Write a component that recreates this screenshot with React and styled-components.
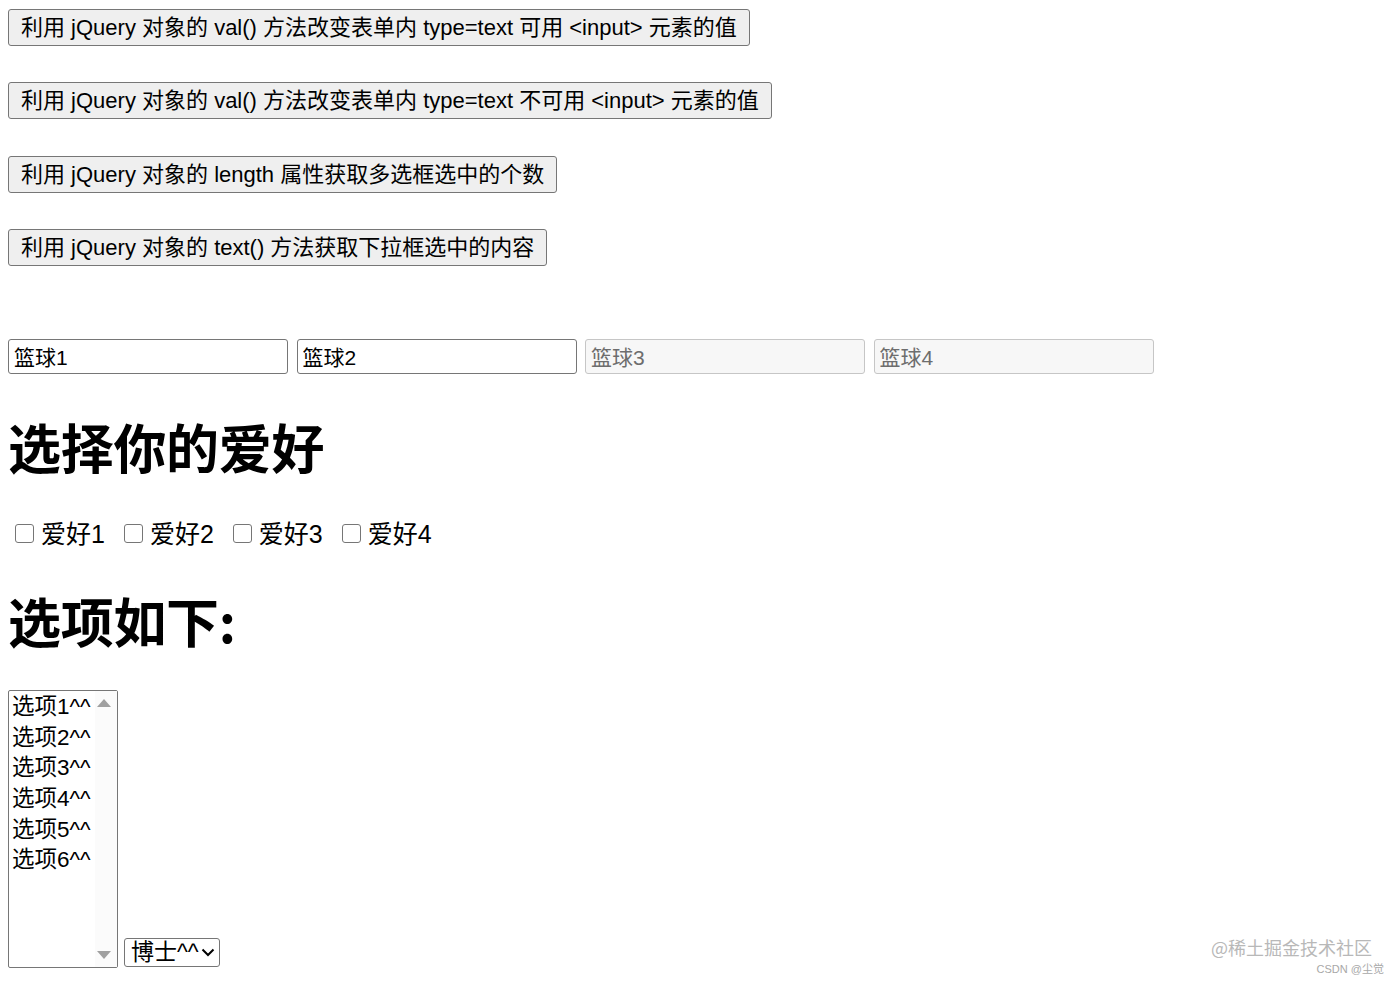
import React from "react";
import styled, { createGlobalStyle } from "styled-components";

const Global = createGlobalStyle`
  html, body { margin: 0; padding: 0; background: #fff; }
  body {
    font-family: "Liberation Sans", Arial, "Noto Sans CJK SC", sans-serif;
    color: #000;
  }
`;

const Page = styled.div`
  position: relative;
  width: 1399px;
  height: 984px;
  padding: 9px 8px 0 8px;
  box-sizing: border-box;
  overflow: hidden;
`;

const ButtonStack = styled.div`
  display: flex;
  flex-direction: column;
  align-items: flex-start;
  gap: 36.3px;
`;

const ActionButton = styled.button`
  height: 37px;
  padding: 0 12px 0 12px;
  font-family: "Liberation Sans", Arial, "Noto Sans CJK SC", sans-serif;
  font-size: 22px;
  line-height: 35px;
  color: #000;
  background: #efefef;
  border: 1px solid #767676;
  border-radius: 3px;
  box-sizing: border-box;
  white-space: nowrap;
  cursor: default;
`;

const InputRow = styled.div`
  display: flex;
  gap: 8.5px;
  margin-top: 73px;
`;

const TextInput = styled.input`
  width: 280px;
  height: 35px;
  box-sizing: border-box;
  padding: 0 5px;
  font-family: "Liberation Sans", Arial, "Noto Sans CJK SC", sans-serif;
  font-size: 21px;
  color: #000;
  background: #fff;
  border: 1px solid #767676;
  border-radius: 3px;
  outline: none;
  &:disabled {
    color: #6d6d6d;
    background: #f7f7f7;
    border-color: #c6c6c6;
  }
`;

const Heading = styled.h1`
  margin: 0;
  font-family: "Noto Sans CJK SC", "Liberation Sans", sans-serif;
  font-weight: 700;
  font-size: 53px;
  line-height: 60px;
  margin-top: ${(p) => p.$top}px;
  letter-spacing: -0.3px;
`;

const CheckRow = styled.div`
  display: flex;
  align-items: center;
  margin-top: 43px;
  height: 30px;
  padding-left: 7px;
  gap: 19px;
`;

const CheckLabel = styled.label`
  display: flex;
  align-items: center;
  gap: 7px;
  font-family: "Liberation Sans", Arial, "Noto Sans CJK SC", sans-serif;
  font-size: 25px;
  line-height: 30px;
`;

const Check = styled.input`
  appearance: none;
  margin: 0;
  width: 19px;
  height: 19px;
  border: 1.5px solid #767676;
  border-radius: 3px;
  background: #fff;
  box-sizing: border-box;
`;

const SelectRow = styled.div`
  display: flex;
  align-items: flex-end;
  gap: 6px;
  margin-top: 40px;
`;

const ListBox = styled.div`
  display: flex;
  width: 110px;
  height: 278px;
  box-sizing: border-box;
  border: 1px solid #767676;
  border-radius: 2px;
  background: #fff;
`;

const OptionList = styled.div`
  flex: 1;
  padding: 1px 0 0 3px;
  display: flex;
  flex-direction: column;
`;

const OptionItem = styled.div`
  font-family: "Liberation Sans", Arial, "Noto Sans CJK SC", sans-serif;
  font-size: 22.5px;
  line-height: 30.7px;
  height: 30.7px;
  white-space: nowrap;
`;

const ScrollTrack = styled.div`
  width: 22px;
  background: #fbfbfb;
  display: flex;
  flex-direction: column;
  justify-content: space-between;
  align-items: center;
  padding: 8px 4px 8px 0;
  box-sizing: border-box;
`;

const Arrow = styled.span`
  width: 0;
  height: 0;
  border-left: 7px solid transparent;
  border-right: 7px solid transparent;
  ${(p) =>
    p.$down
      ? "border-top: 8px solid #a0a0a0;"
      : "border-bottom: 8px solid #a0a0a0;"}
`;

const DropWrap = styled.div`
  position: relative;
  width: 96px;
  height: 29px;
  margin-bottom: 1px;
`;

const DropSelect = styled.select`
  appearance: none;
  width: 100%;
  height: 100%;
  box-sizing: border-box;
  font-family: "Liberation Sans", Arial, "Noto Sans CJK SC", sans-serif;
  font-size: 23px;
  line-height: 27px;
  color: #000;
  background: #fff;
  border: 1px solid #767676;
  border-radius: 3px;
  padding: 0 0 0 6px;
  outline: none;
`;

const Chevron = styled.svg`
  position: absolute;
  right: 5px;
  top: 10px;
  pointer-events: none;
`;

const Watermark = styled.div`
  position: absolute;
  right: 15px;
  bottom: 8px;
  display: flex;
  flex-direction: column;
  align-items: flex-end;
  font-family: "Noto Sans CJK SC", "Liberation Sans", sans-serif;
`;

const WmMain = styled.div`
  font-size: 18px;
  line-height: 22px;
  color: #b8b8b8;
  margin-right: 12px;
  margin-bottom: 4px;
`;

const WmSub = styled.div`
  font-size: 11px;
  line-height: 14px;
  color: #a8a8a8;
  font-family: "Liberation Sans", "Noto Sans CJK SC", sans-serif;
`;

const buttons = [
  "利用 jQuery 对象的 val() 方法改变表单内 type=text 可用 <input> 元素的值",
  "利用 jQuery 对象的 val() 方法改变表单内 type=text 不可用 <input> 元素的值",
  "利用 jQuery 对象的 length 属性获取多选框选中的个数",
  "利用 jQuery 对象的 text() 方法获取下拉框选中的内容",
];

export default function App() {
  return (
    <Page>
      <Global />
      <ButtonStack>
        {buttons.map((b) => (
          <ActionButton key={b}>{b}</ActionButton>
        ))}
      </ButtonStack>
      <InputRow>
        <TextInput defaultValue="篮球1" />
        <TextInput defaultValue="篮球2" />
        <TextInput defaultValue="篮球3" disabled />
        <TextInput defaultValue="篮球4" disabled />
      </InputRow>
      <Heading $top={42}>选择你的爱好</Heading>
      <CheckRow>
        {[1, 2, 3, 4].map((n) => (
          <CheckLabel key={n}>
            <Check type="checkbox" />
            爱好{n}
          </CheckLabel>
        ))}
      </CheckRow>
      <Heading $top={41}>选项如下:</Heading>
      <SelectRow>
        <ListBox role="listbox">
          <OptionList>
            {[1, 2, 3, 4, 5, 6].map((n) => (
              <OptionItem key={n}>选项{n}^^</OptionItem>
            ))}
          </OptionList>
          <ScrollTrack>
            <Arrow />
            <Arrow $down />
          </ScrollTrack>
        </ListBox>
        <DropWrap>
          <DropSelect defaultValue="博士">
            <option value="博士">博士^^</option>
          </DropSelect>
          <Chevron width="14" height="9" viewBox="0 0 14 9">
            <path d="M1.5 1.5 L7 7 L12.5 1.5" fill="none" stroke="#000" strokeWidth="2" />
          </Chevron>
        </DropWrap>
      </SelectRow>
      <Watermark>
        <WmMain>@稀土掘金技术社区</WmMain>
        <WmSub>CSDN @尘觉</WmSub>
      </Watermark>
    </Page>
  );
}
